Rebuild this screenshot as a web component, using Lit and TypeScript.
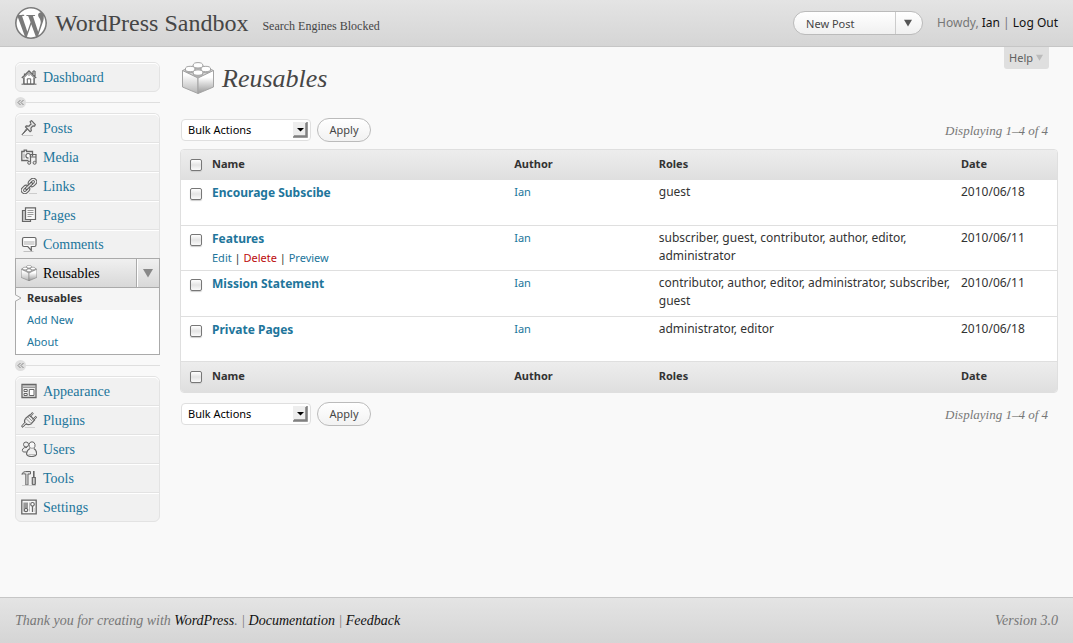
import { LitElement, html, css, svg, nothing } from "lit";
import { customElement, property } from "lit/decorators.js";

const wpLogo =
  "M21.469 6.825c.84 1.537 1.318 3.3 1.318 5.175 0 3.979-2.156 7.456-5.363 9.325l3.295-9.527c.615-1.54.82-2.771.82-3.864 0-.405-.026-.78-.07-1.11m-7.981.105c.647-.03 1.232-.105 1.232-.105.582-.075.514-.93-.067-.899 0 0-1.755.135-2.88.135-1.064 0-2.85-.15-2.85-.15-.585-.03-.661.855-.075.885 0 0 .54.061 1.125.09l1.68 4.605-2.37 7.08L5.354 6.9c.649-.03 1.234-.1 1.234-.1.585-.075.516-.93-.065-.896 0 0-1.746.138-2.874.138-.2 0-.438-.008-.69-.015C4.911 3.15 8.235 1.215 12 1.215c2.809 0 5.365 1.072 7.286 2.833-.046-.003-.091-.009-.141-.009-1.06 0-1.812.923-1.812 1.914 0 .89.513 1.643 1.06 2.531.411.72.89 1.643.89 2.977 0 .915-.354 1.994-.821 3.479l-1.075 3.585-3.9-11.61.001.014zM12 22.784c-1.059 0-2.081-.153-3.048-.437l3.237-9.406 3.315 9.087c.024.053.05.101.078.149-1.12.393-2.325.609-3.582.609M1.211 12c0-1.564.336-3.05.935-4.39L7.29 21.709C3.694 19.96 1.212 16.271 1.211 12M12 0C5.385 0 0 5.385 0 12s5.385 12 12 12 12-5.385 12-12S18.615 0 12 0";

const shapes: Record<string, unknown> = {
  dashboard: svg`
    <path d="M3 8.5 8 3.5l5 5V15H3z" fill="#fff"/>
    <path d="M.8 9 8 1.8 15.2 9M3.5 4.5v2M12 2v3M14 2v5M12 2h2" stroke-width="1.2"/>
    <path d="M2.8 8.8V15M13.2 8.8V15M.5 15.2h15M6.3 15V9.8h3.4V15M8 5.2v1.6M5 10.5h.1M11 10.5h.1" />
    <path d="M3.4 8.6 8 4.1l4.6 4.5" stroke="#aaa"/>`,
  posts: svg`
    <path d="M9.2 1.6 10.6.7l3.700 3.900-.700 1.600-1.900-.200-1.800 2.100.400 2.700-1.200.900L4.500 7l.800-1.200 2.700.300 1.900-2.100z" fill="#e4e4e4" stroke-width="1.200"/>
    <path d="M6.600 9.200 1 14.800 5.800 8.400" fill="#888"/>
    <path d="M9.500 3.500 12 6" stroke="#aaa"/>
    <path d="M1 15.500h11" stroke="#ccc"/>`,
  media: svg`
    <path d="M.8 2.500h2.400V1.200h2.300v1.300H11.500v9H.8z" fill="#f8f8f8" stroke-width="1.300"/>
    <circle cx="7.200" cy="6.800" r="2.300" fill="#fff" stroke-width="1.200"/>
    <path d="M3 4.500v5" stroke="#999"/>
    <path d="M7.500 11.500V7.500h8v8h-8z" fill="#f1f1f1" stroke="none"/>
    <path d="M9.500 13.500V5.500h5.500V13.500M9.500 8h5.500" stroke-width="1.200"/>
    <circle cx="8.200" cy="13.800" r="1.500" fill="#ddd"/><circle cx="13.600" cy="13.800" r="1.500" fill="#ddd"/>`,
  links: svg`
    <g transform="rotate(-45 8 8)" fill="#f1f1f1">
      <rect x="8.500" y="4.500" width="9" height="7" rx="3.500" stroke-width="1.100"/>
      <rect x="11" y="6.800" width="4.200" height="2.400" rx="1.200"/>
      <rect x="-1.500" y="4.500" width="9" height="7" rx="3.500" stroke-width="1.100"/>
      <rect x=".8" y="6.800" width="4.200" height="2.400" rx="1.200"/>
      <rect x="3.500" y="6.800" width="9" height="2.400" rx="1.200" fill="#ddd" stroke="#555"/>
    </g>
    <path d="M8 15.500h8" stroke="#ccc"/>`,
  pages: svg`
    <path d="M4 3.500H1.500v11h8V13" fill="#ccc" stroke-width="1.200"/>
    <path d="M4.500.8h10v11.700h-10z" fill="#f8f8f8" stroke-width="1.200"/>
    <path d="M6.500 3.500h6M6.500 5.500h6M6.500 7.500h6M6.500 9.500h4" stroke="#999"/>`,
  comments: svg`
    <path d="M3 1.500h10.500Q15 1.500 15 3v6q0 1.500-1.500 1.500h-3.200v4L6.800 10.500H3Q1.500 10.500 1.500 9V3Q1.500 1.500 3 1.500z" fill="#fcfcfc" stroke-width="1.200"/>
    <path d="M3 5h10.500v4H3z" fill="#d4d4d4" stroke="none"/>
    <path d="M2.500 15.600h10" stroke="#bbb"/>`,
  appearance: svg`
    <path d="M1 1.500h14v13H1z" fill="#eee" stroke-width="1.300"/>
    <path d="M1.500 4.500h13M1.500 3h13" stroke="#999"/>
    <path d="M3 6.500h3.200v2H3zM3 10.500h3.200v2H3zM8.300 6.500h4.700v6H8.300z" fill="#fff"/>`,
  plugins: svg`
    <path d="M4.500 6.500 8.500 3l5 5-3.500 4q-3 1.500-5.500-.5-2-2.500 0-5z" fill="#eee" stroke-width="1.200"/>
    <path d="M8.800 4.500 12 .8M12 8l3.500-3.500" stroke-width="2.200"/>
    <path d="M9.500 4 11.800 1.200M12.500 7.500l2.800-2.800" stroke="#f4f4f4" stroke-width=".7"/>
    <path d="M5 6.500l5 5M7 5l5 5" stroke="#999"/>
    <path d="M5.500 11.500 2 15.200Q.5 15.500.8 13.800L4 10" fill="#ccc"/>
    <path d="M4 15.600h10" stroke="#ccc"/>`,
  users: svg`
    <circle cx="5" cy="3.500" r="2.500" fill="#eee"/>
    <path d="M5.500 11H2.300Q.8 9.500 1.600 8q1.500-2 4.500-1.500" fill="#eee"/>
    <path d="M8 3.500Q8.500.8 11 .8t3 2.700-1.500 3.800h-3Q8 6 8 3.500z" fill="#f8f8f8"/>
    <path d="M9 7.500Q6 9 5.500 12.500q.2 3 5 3t5.200-3Q15.500 9 12.800 7.500" fill="#f1f1f1" stroke-width="1.200"/>
    <path d="M7.500 13.500h6.500" stroke="#bbb"/>`,
  tools: svg`
    <path d="M.8 4.200Q2 1.500 4.500 1.500H9.500v2.500H7V15H4.800V4Q2.500 3.500.8 4.200z" fill="#ddd"/>
    <path d="M12.800 1v6" stroke-width="1.600"/>
    <path d="M11.300 7.500h3v6.500q-1.500 1.800-3 0z" fill="#ccc" stroke-width="1.200"/>
    <path d="M1 15.600h14" stroke="#ccc"/>`,
  settings: svg`
    <path d="M.8 1.200h14.400v13.600H.8z" fill="#f8f8f8" stroke-width="1.300"/>
    <path d="M4 3.500v5.500M6 3.500v5.500M11.500 7v6" stroke-width="1.300"/>
    <circle cx="5" cy="11" r="1.700" fill="#fff" stroke-width="1.200"/><circle cx="11.500" cy="5.300" r="1.800" fill="#fff" stroke-width="1.200"/>
    <path d="M8.500 3.500v9M2.500 3.500v9M14 9v4" stroke="#bbb"/>`,
};

const brick = (size: number, stroke = "#a4a4a4") => html`
  <svg class="pic" width=${size} height=${size} viewBox="0 0 32 32" fill="none" stroke=${stroke} aria-hidden="true">
    <defs>
      <linearGradient id="side" x1="0" y1="0" x2="0" y2="1">
        <stop offset=".2" stop-color="#fdfdfd"/><stop offset="1" stop-color="#b4b4b4"/>
      </linearGradient>
      <linearGradient id="front" x1="0" y1="0" x2="0" y2="1">
        <stop offset=".3" stop-color="#fff"/><stop offset="1" stop-color="#999"/>
      </linearGradient>
    </defs>
    <path d="M.5 8.500 16 2l15.500 6.500L16 16z" fill="#dcdcdc"/>
    <path d="M.5 8.500 16 16v15.500L.5 25z" fill="url(#side)"/>
    <path d="M31.500 8.500 16 16v15.500L31.500 25z" fill="url(#front)"/>
    ${[[16, 3.3], [8.2, 7], [23.800, 7], [16, 10.600]].map(
      ([x, y]) => svg`
        <path d=${`M${x - 4.8} ${y}v1a4.800 2.700 0 0 0 9.600 0V${y}`} fill="#ccc"/>
        <ellipse cx=${x} cy=${y} rx="4.800" ry="2.700" fill="#fff"/>`
    )}
  </svg>`;

@customElement("menu-icon")
class MenuIcon extends LitElement {
  @property() name = "";
  static styles = css`
    :host { display: block; width: 16px; height: 16px; }
    svg { display: block; }
  `;
  render() {
    return this.name === "reusables"
      ? brick(16, "#777")
      : html`<svg width="16" height="16" viewBox="0 0 16 16" fill="none" stroke="#666" aria-hidden="true">${shapes[this.name]}</svg>`;
  }
}

interface Row {
  name: string;
  roles: string;
  date: string;
  actions?: boolean;
}

const rows: Row[] = [
  { name: "Encourage Subscibe", roles: "guest", date: "2010/06/18" },
  { name: "Features", roles: "subscriber, guest, contributor, author, editor, administrator", date: "2010/06/11", actions: true },
  { name: "Mission Statement", roles: "contributor, author, editor, administrator, subscriber, guest", date: "2010/06/11" },
  { name: "Private Pages", roles: "administrator, editor", date: "2010/06/18" },
];

@customElement("app-root")
class AppRoot extends LitElement {
  static styles = css`
    * { box-sizing: border-box; }
    :host {
      display: flex;
      flex-direction: column;
      min-height: 100vh;
      background: #f9f9f9;
      color: #333;
      font: 11px/18px "Noto Sans", "Open Sans", sans-serif;
    }
    a { color: #21759b; text-decoration: none; }
    h1, h2, p, ul { margin: 0; padding: 0; font-weight: normal; }
    ul { list-style: none; }
    svg { display: block; flex: none; }
    button, select { font-family: inherit; }
    .serif { font-family: "Liberation Serif", serif; }

    .top {
      display: flex;
      align-items: center;
      height: 47px;
      padding: 0 15px;
      border-bottom: 1px solid #c6c6c6;
      background: linear-gradient(#e4e4e4, #d5d5d5);
    }
    .site { font-size: 24px; line-height: 32px; margin-left: 8px; color: #464646; }
    .site a { color: inherit; }
    .privacy { font-size: 12px; line-height: 16px; margin: 6px auto 0 14px; color: #464646; }
    .favorite {
      display: flex;
      width: 130px;
      height: 24px;
      margin-right: 12px;
      border: 1px solid #bbb;
      border-radius: 12px;
      background: linear-gradient(#fff, #f0f0f0);
      overflow: hidden;
    }
    .favorite button { border: 0; padding: 0 12px; background: none; font-size: 11px; color: #464646; text-align: left; }
    .favorite .new { flex: 1; }
    .favorite .more { width: 27px; padding: 0 8px; border-left: 1px solid #ccc; }
    .user { padding-left: 2px; font-size: 12px; color: #777; }
    .user a { color: #111; }

    .body { flex: 1; display: grid; grid-template-columns: 145px 1fr; gap: 20px; padding: 0 15px; }
    .side { padding: 15px 0; }
    .group { border: 1px solid #e3e3e3; border-radius: 6px; background: #f1f1f1; }
    .group.open { border-radius: 6px 6px 0 0; border-bottom: 0; }
    .item {
      display: flex;
      align-items: center;
      gap: 6px;
      height: 28px;
      padding-left: 5px;
      box-shadow: inset 0 1px #fff;
      border-radius: 5px;
      font-size: 14px;
    }
    .label { padding-top: 2px; }
    li + li .item { height: 29px; border-top: 1px solid #e3e3e3; border-radius: 0; }
    .current { display: flex; height: 30px; border: 1px solid #aaa; background: linear-gradient(#f0f0f0, #d8d8d8); }
    .current a { flex: 1; display: flex; align-items: center; gap: 6px; padding-left: 5px; color: #000; font-size: 14px; }
    .current button { width: 23px; padding: 0 6px; border: 0; border-left: 1px solid #aaa; background: none; box-shadow: inset 1px 0 #fff; }
    .sub { position: relative; border: 1px solid #aaa; border-top: 0; background: #fff; }
    .sub a { display: block; padding: 0 0 2px 11px; line-height: 20px; }
    .sub .here { background: #f5f5f5; color: #333; font-weight: bold; }
    .notch { position: absolute; left: -1px; top: 5px; }
    .sep { display: flex; align-items: center; height: 21px; border: 0; }
    .sep::after { content: ""; flex: 1; height: 1px; background: #dfdfdf; }
    .sep button { width: 11px; height: 11px; padding: 0; border: 0; border-radius: 50%; background: #dfdfdf; }

    .main { min-width: 0; }
    .head { display: flex; align-items: flex-start; gap: 8px; margin-bottom: 22px; }
    .head .pic { margin: 15px 0 0 2px; }
    .head h2 { flex: 1; padding-top: 16px; font-size: 26px; line-height: 32px; font-style: italic; color: #464646; }
    .help {
      height: 22px;
      margin-right: 9px;
      padding: 0 6px 2px 5px;
      display: flex;
      align-items: center;
      gap: 3px;
      border: 0;
      border-radius: 0 0 3px 3px;
      background: #dfdfdf;
      color: #606060;
      font-size: 11px;
    }
    .nav { display: flex; align-items: center; gap: 6px; height: 25px; padding-left: 1px; }
    .pick { position: relative; width: 130px; height: 22px; }
    .pick select {
      appearance: none;
      width: 100%;
      height: 100%;
      padding: 0 6px;
      border: 1px solid #dfdfdf;
      border-radius: 4px;
      background: #fff;
      color: #000;
      font-size: 11px;
    }
    .pick svg { position: absolute; right: 3px; top: 3px; pointer-events: none; }
    .apply {
      width: 54px;
      height: 24px;
      padding: 0;
      border: 1px solid #bbb;
      border-radius: 12px;
      background: linear-gradient(#fff, #f2f2f2);
      color: #464646;
      font-size: 11px;
    }
    .count { margin: 0 10px 0 auto; padding-top: 2px; font-size: 13px; font-style: italic; color: #777; }
    table {
      width: 100%;
      margin: 7px 0 8px;
      table-layout: fixed;
      border: 1px solid #dfdfdf;
      border-collapse: separate;
      border-spacing: 0;
      border-radius: 4px;
      background: #fff;
      overflow: hidden;
    }
    th, td { padding: 3px 0 0 8px; text-align: left; vertical-align: top; }
    th { height: 30px; padding: 0 0 2px 8px; vertical-align: middle; background: linear-gradient(#ededed, #dfdfdf); }
    td { height: 45px; border-bottom: 1px solid #dfdfdf; }
    tr:nth-child(odd) td { height: 46px; }
    .check { width: 23px; padding-left: 9px; }
    .c-name, .c-roles { width: 34.5%; }
    .c-author { width: 16.5%; }
    .title { display: block; font-size: 12px; font-weight: bold; line-height: 20px; }
    td.name { padding-top: 3px; }
    .wide { font-size: 12px; }
    .del { color: #bc0b0b; }
    input {
      appearance: none;
      display: block;
      width: 12px;
      height: 12px;
      margin: 0;
      border: 1px solid #777;
      border-radius: 2px;
      background: linear-gradient(#fff, #e4e4e4 50%, #fafafa);
      box-shadow: 0 1px 1px #ccc;
    }
    th.check input { margin-top: 1px; }
    td input { margin-top: 5px; }

    .foot {
      display: flex;
      justify-content: space-between;
      align-items: center;
      height: 46px;
      padding: 0 15px;
      border-top: 1px solid #c6c6c6;
      background: linear-gradient(#e4e4e4, #d5d5d5);
      color: #777;
      font-size: 14px;
      font-style: italic;
    }
    .foot a { color: #111; }
  `;

  private items(list: string[]) {
    return list.map(
      (n) => html`<li><a class="item serif" href="#"><menu-icon name=${n.toLowerCase()}></menu-icon><span class="label">${n}</span></a></li>`
    );
  }

  private arrow(color: string, size: number) {
    return html`<svg width=${size} height=${size} viewBox="0 0 10 10" aria-hidden="true"><path d="M0 1h10L5 9.500z" fill=${color} /></svg>`;
  }

  private separator() {
    return html`<div class="sep">
      <button aria-label="Collapse menu">
        <svg width="11" height="11" viewBox="0 0 11 11" fill="none" stroke="#888"><path d="M5.500 3 3 5.500 5.500 8M8.500 3 6 5.500 8.500 8" /></svg>
      </button>
    </div>`;
  }

  private nav(id: string) {
    return html`<div class="nav">
      <div class="pick">
        <select id=${id} aria-label="Bulk Actions"><option>Bulk Actions</option><option>Delete</option></select>
        <svg width="15" height="16" viewBox="0 0 15 16" aria-hidden="true">
          <path d="M0 0h15v16H0z" fill="#eee" />
          <path d="M14 0v15H0M13 1v13H1" fill="none" stroke="#808080" stroke-width="1.500" />
          <path d="M4 6h7L7.500 9.500z" fill="#000" />
        </svg>
      </div>
      <button class="apply">Apply</button>
      <p class="count serif">Displaying 1–4 of 4</p>
    </div>`;
  }

  private headings(label: string) {
    return html`<tr>
      <th class="check"><input type="checkbox" aria-label=${label} /></th>
      <th class="c-name">Name</th>
      <th class="c-author">Author</th>
      <th class="c-roles">Roles</th>
      <th>Date</th>
    </tr>`;
  }

  render() {
    return html`
      <header class="top">
        <svg width="32" height="32" viewBox="0 0 24 24" aria-hidden="true">
          <circle cx="12" cy="12" r="12" fill="#fff" />
          <path d=${wpLogo} fill="#7a7a7a" />
        </svg>
        <h1 class="site serif"><a href="#">WordPress Sandbox</a></h1>
        <a class="privacy serif" href="#">Search Engines Blocked</a>
        <div class="favorite">
          <button class="new">New Post</button>
          <button class="more" aria-label="More actions">${this.arrow("#555", 8)}</button>
        </div>
        <p class="user">Howdy, <a href="#">Ian</a> | <a href="#">Log Out</a></p>
      </header>

      <div class="body">
        <nav class="side">
          <ul class="group">${this.items(["Dashboard"])}</ul>
          ${this.separator()}
          <ul class="group open">${this.items(["Posts", "Media", "Links", "Pages", "Comments"])}</ul>
          <div class="current">
            <a class="serif" href="#"><menu-icon name="reusables"></menu-icon><span class="label">Reusables</span></a>
            <button aria-label="Toggle submenu">${this.arrow("#888", 10)}</button>
          </div>
          <ul class="sub">
            <li><a class="here" href="#">Reusables</a></li>
            <li><a href="#">Add New</a></li>
            <li><a href="#">About</a></li>
            <svg class="notch" width="7" height="10" viewBox="0 0 7 10" aria-hidden="true">
              <path d="M0 1.500 6 5 0 8.500z" fill="#f9f9f9" /><path d="M0 1.500 6 5 0 8.500" fill="none" stroke="#aaa" />
            </svg>
          </ul>
          ${this.separator()}
          <ul class="group">${this.items(["Appearance", "Plugins", "Users", "Tools", "Settings"])}</ul>
        </nav>

        <main class="main">
          <div class="head">
            ${brick(32)}
            <h2 class="serif">Reusables</h2>
            <button class="help">Help ${this.arrow("#bbb", 7)}</button>
          </div>
          ${this.nav("bulk-top")}
          <table>
            <thead>${this.headings("Select all")}</thead>
            <tbody>
              ${rows.map(
                (r) => html`<tr>
                  <td class="check"><input type="checkbox" aria-label=${`Select ${r.name}`} /></td>
                  <td class="name">
                    <a class="title" href="#">${r.name}</a>
                    ${r.actions
                      ? html`<a href="#">Edit</a> | <a class="del" href="#">Delete</a> | <a href="#">Preview</a>`
                      : nothing}
                  </td>
                  <td><a href="#">Ian</a></td>
                  <td class="wide">${r.roles}</td>
                  <td class="wide">${r.date}</td>
                </tr>`
              )}
            </tbody>
            <tfoot>${this.headings("Select all, bottom")}</tfoot>
          </table>
          ${this.nav("bulk-bottom")}
        </main>
      </div>

      <footer class="foot serif">
        <p>Thank you for creating with <a href="#">WordPress</a>. | <a href="#">Documentation</a> | <a href="#">Feedback</a></p>
        <p>Version 3.0</p>
      </footer>
    `;
  }
}
